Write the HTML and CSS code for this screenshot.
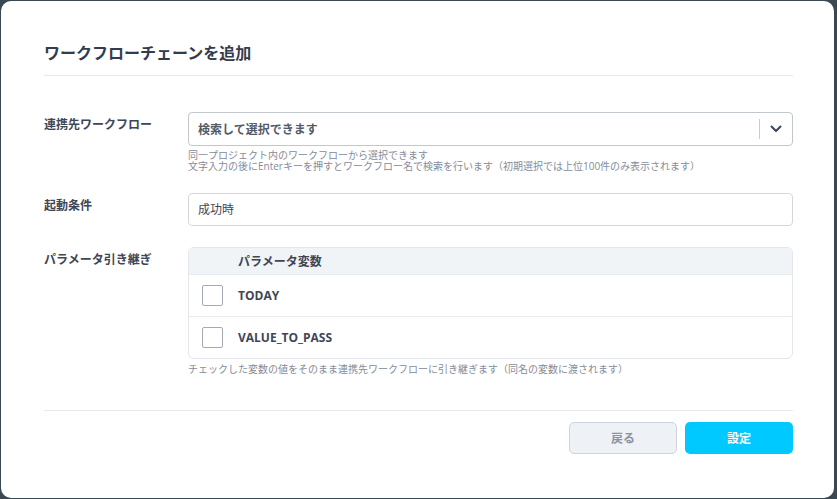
FILE: index.html
```html
<!DOCTYPE html>
<html lang="ja">
<head>
  <meta charset="UTF-8">
  <title>ワークフローチェーンを追加</title>
  <link rel="stylesheet" href="styles.css">
</head>
<body>

<div class="modal">
  <div class="modal-header">ワークフローチェーンを追加</div>

  <div class="modal-body">
    <div class="form-row">
      <div class="form-label">連携先ワークフロー</div>
      <div class="form-field">
        <div class="select-box">
          <span class="select-placeholder">検索して選択できます</span>
          <span class="select-sep"></span>
          <span class="select-arrow">
            <svg width="12" height="8" viewBox="0 0 12 8"><path d="M1.5 1.5 L6 6 L10.5 1.5" fill="none" stroke="#3e4656" stroke-width="2" stroke-linecap="round" stroke-linejoin="round"/></svg>
          </span>
        </div>
        <div class="help">同一プロジェクト内のワークフローから選択できます<br>文字入力の後にEnterキーを押すとワークフロー名で検索を行います（初期選択では上位100件のみ表示されます）</div>
      </div>
    </div>

    <div class="form-row">
      <div class="form-label">起動条件</div>
      <div class="form-field">
        <div class="text-input">成功時</div>
      </div>
    </div>

    <div class="form-row">
      <div class="form-label">パラメータ引き継ぎ</div>
      <div class="form-field">
        <div class="param-table">
          <div class="param-head">
            <span class="cell-check"></span>
            <span>パラメータ変数</span>
          </div>
          <div class="param-row">
            <span class="cell-check"><span class="checkbox"></span></span>
            <span>TODAY</span>
          </div>
          <div class="param-row">
            <span class="cell-check"><span class="checkbox"></span></span>
            <span>VALUE_TO_PASS</span>
          </div>
        </div>
        <div class="help help-table">チェックした変数の値をそのまま連携先ワークフローに引き継ぎます（同名の変数に渡されます）</div>
      </div>
    </div>
  </div>

  <div class="modal-footer">
    <button class="btn btn-back">戻る</button>
    <button class="btn btn-submit">設定</button>
  </div>
</div>

</body>
</html>
```

FILE: styles.css
```css
body {
  margin: 0;
  padding: 0;
  background-color: #394852;
  font-family: 'Open Sans', 'Noto Sans CJK JP', sans-serif;
  color: #3e4656;
  overflow: hidden;
}
.modal {
  margin: 1px 0 0 1px;
  width: 833px;
  height: 497px;
  box-sizing: border-box;
  background: white;
  border-radius: 10px;
  padding: 0 41px 0 43px;
}
.modal-header {
  padding-top: 40px;
  padding-bottom: 10px;
  line-height: 24px;
  font-size: 16px;
  font-weight: bold;
  color: #333b4c;
  border-bottom: 1px solid #e6e8ec;
}
.modal-body {
  padding-top: 36px;
  padding-bottom: 35px;
  border-bottom: 1px solid #e6e8ec;
}
.form-row {
  display: grid;
  grid-template-columns: 144px 1fr;
  margin-bottom: 21px;
}
.form-row:last-child {
  margin-bottom: 0;
}
.form-label {
  font-size: 12px;
  font-weight: bold;
  line-height: 18px;
  padding-top: 4px;
  color: #3e4656;
}
.select-box {
  height: 34px;
  box-sizing: border-box;
  border: 1px solid #c2c7ce;
  border-radius: 4px;
  display: flex;
  align-items: center;
  padding-left: 9px;
}
.select-placeholder {
  flex: 1;
  font-size: 12px;
  font-weight: bold;
  color: #535b69;
}
.select-sep {
  width: 1px;
  height: 20px;
  background: #c8ccd2;
}
.select-arrow {
  width: 32px;
  display: flex;
  justify-content: center;
  align-items: center;
}
.help {
  margin-top: 4px;
  font-size: 10px;
  line-height: 11px;
  color: #858c99;
}
.help-table {
  margin-top: 5px;
}
.text-input {
  height: 33px;
  box-sizing: border-box;
  border: 1px solid #d3d8df;
  border-radius: 4px;
  padding-left: 9px;
  font-size: 12px;
  line-height: 31px;
  color: #3e4656;
}
.param-table {
  border: 1px solid #e3e6eb;
  border-radius: 6px;
  overflow: hidden;
}
.param-head, .param-row {
  display: flex;
  align-items: center;
  font-size: 12px;
  font-weight: bold;
  color: #3e4656;
}
.param-head {
  height: 26px;
  background: #f1f4f7;
}
.param-row {
  height: 41px;
  border-top: 1px solid #e8ebef;
}
.cell-check {
  width: 49px;
  display: flex;
  justify-content: center;
  box-sizing: border-box;
  padding-right: 2px;
}
.checkbox {
  width: 21px;
  height: 21px;
  box-sizing: border-box;
  border: 1px solid #a3aab5;
  border-radius: 2px;
  background: white;
}
.modal-footer {
  display: flex;
  justify-content: flex-end;
  gap: 8px;
  padding-top: 11px;
}
.btn {
  width: 108px;
  height: 32px;
  border-radius: 5px;
  font-family: 'Open Sans', 'Noto Sans CJK JP', sans-serif;
  font-size: 12px;
  font-weight: bold;
  cursor: pointer;
}
.btn-back {
  background: #eef2f6;
  border: 1px solid #cdd4dc;
  color: #8a93a3;
}
.btn-submit {
  background: #00c9ff;
  border: none;
  color: white;
}
```
